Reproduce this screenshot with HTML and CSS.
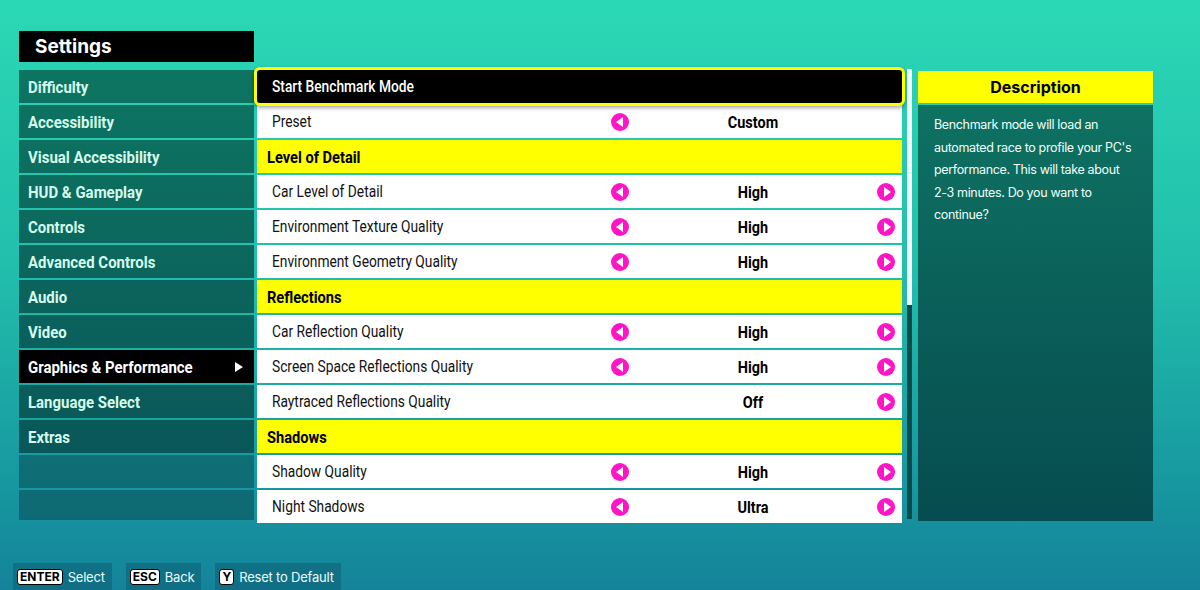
FILE: index.html
```html
<!DOCTYPE html>
<html lang="en">
<head>
    <meta charset="UTF-8">
    <meta name="viewport" content="width=device-width, initial-scale=1.0">
    <title>Settings</title>
    <link rel="stylesheet" href="styles.css">
</head>
<body>
    <div class="screen">
        <div class="main">
            <!-- left menu -->
            <div class="side">
                <h1 class="title">Settings</h1>
                <ul class="menu">
                    <li><span class="t">Difficulty</span></li>
                    <li><span class="t">Accessibility</span></li>
                    <li><span class="t">Visual Accessibility</span></li>
                    <li><span class="t">HUD &amp; Gameplay</span></li>
                    <li><span class="t">Controls</span></li>
                    <li><span class="t">Advanced Controls</span></li>
                    <li><span class="t">Audio</span></li>
                    <li><span class="t">Video</span></li>
                    <li class="on"><span class="t">Graphics &amp; Performance</span> <span class="tri"></span></li>
                    <li><span class="t">Language Select</span></li>
                    <li><span class="t">Extras</span></li>
                    <li class="empty"></li>
                    <li class="empty"></li>
                </ul>
            </div>

            <!-- options list -->
            <div class="options">
                <div class="list">
                    <div class="row bench"><span class="t">Start Benchmark Mode</span></div>
                    <div class="row">
                        <span class="label"><span class="t">Preset</span></span>
                        <div class="ctrl"><i class="arr left"></i><b>Custom</b><i class="arr right hide"></i></div>
                    </div>
                    <div class="row head"><span class="t">Level of Detail</span></div>
                    <div class="row">
                        <span class="label"><span class="t">Car Level of Detail</span></span>
                        <div class="ctrl"><i class="arr left"></i><b>High</b><i class="arr right"></i></div>
                    </div>
                    <div class="row">
                        <span class="label"><span class="t">Environment Texture Quality</span></span>
                        <div class="ctrl"><i class="arr left"></i><b>High</b><i class="arr right"></i></div>
                    </div>
                    <div class="row">
                        <span class="label"><span class="t">Environment Geometry Quality</span></span>
                        <div class="ctrl"><i class="arr left"></i><b>High</b><i class="arr right"></i></div>
                    </div>
                    <div class="row head"><span class="t">Reflections</span></div>
                    <div class="row">
                        <span class="label"><span class="t">Car Reflection Quality</span></span>
                        <div class="ctrl"><i class="arr left"></i><b>High</b><i class="arr right"></i></div>
                    </div>
                    <div class="row">
                        <span class="label"><span class="t">Screen Space Reflections Quality</span></span>
                        <div class="ctrl"><i class="arr left"></i><b>High</b><i class="arr right"></i></div>
                    </div>
                    <div class="row">
                        <span class="label"><span class="t">Raytraced Reflections Quality</span></span>
                        <div class="ctrl"><i class="arr left hide"></i><b>Off</b><i class="arr right"></i></div>
                    </div>
                    <div class="row head"><span class="t">Shadows</span></div>
                    <div class="row">
                        <span class="label"><span class="t">Shadow Quality</span></span>
                        <div class="ctrl"><i class="arr left"></i><b>High</b><i class="arr right"></i></div>
                    </div>
                    <div class="row">
                        <span class="label"><span class="t">Night Shadows</span></span>
                        <div class="ctrl"><i class="arr left"></i><b>Ultra</b><i class="arr right"></i></div>
                    </div>
                </div>
                <div class="scroll"><div class="thumb"></div></div>
            </div>

            <!-- description -->
            <div class="desc">
                <div class="desc-head">Description</div>
                <div class="desc-body">Benchmark mode will load an<br>automated race to profile your PC's<br>performance. This will take about<br>2-3 minutes. Do you want to<br>continue?</div>
            </div>
        </div>

        <div class="bottom">
            <div class="hint"><span class="key">ENTER</span>Select</div>
            <div class="hint"><span class="key">ESC</span>Back</div>
            <div class="hint"><span class="key">Y</span>Reset to Default</div>
        </div>
    </div>
</body>
</html>
```

FILE: styles.css
```css
*{padding: 0;
margin: 0;
box-sizing: border-box;}
ul{list-style: none;}
body{
    width: 1200px;
    height: 590px;
    overflow: hidden;
    background: linear-gradient(180deg, #2bd8b5 0%, #22bfac 45%, #179aa0 80%, #14839a 100%);
    font-family: "Inter", "Liberation Sans", sans-serif;
}
.screen{
    height: 590px;
    display: flex;
    flex-direction: column;
    padding: 31px 0 0 19px;
}
.main{
    display: flex;
    align-items: flex-start;
    height: 490px;
}
/* narrow game font: squeeze Roboto */
.t{
    display: inline-block;
    white-space: nowrap;
    transform: scaleX(0.86);
    transform-origin: left center;
}

/* left menu */
.side{
    width: 235px;
}
.title{
    height: 31px;
    background: #000;
    color: #fff;
    font-size: 19px;
    font-weight: 700;
    line-height: 31px;
    padding-left: 16px;
    margin-bottom: 8px;
}
.menu{
    display: flex;
    flex-direction: column;
    gap: 2px;
    height: 450px;
    overflow: hidden;
}
.menu li{
    height: 33px;
    flex: none;
    display: flex;
    align-items: center;
    padding: 0 9px;
    font-family: "Roboto", "Liberation Sans", sans-serif;
    font-weight: 700;
    font-size: 17px;
    color: #d4fbec;
    background: linear-gradient(180deg, #0e7a64 0px, #0c6b5e 200px, #0a5859 440px, #0a5059 540px) fixed;
}
.menu li .t{
    transform: scaleX(0.88);
}
.menu li.on{
    background: #000;
    color: #fff;
    justify-content: space-between;
}
.menu li.empty{
    background: rgba(10, 72, 82, 0.55);
}
.tri{
    width: 0;
    height: 0;
    border-left: 8px solid #fff;
    border-top: 5px solid transparent;
    border-bottom: 5px solid transparent;
    margin-right: 2px;
}

/* options */
.options{
    display: flex;
    gap: 5px;
    margin-left: 3px;
    margin-top: 39px;
}
.list{
    width: 645px;
    height: 450px;
    display: flex;
    flex-direction: column;
    gap: 2px;
}
.row{
    height: 33px;
    flex: none;
    background: #fff;
    display: flex;
    align-items: center;
    padding-left: 15px;
    font-family: "Roboto", "Liberation Sans", sans-serif;
    font-size: 16px;
    color: #111;
}
.row.head{
    background: #ffff00;
    padding-left: 10px;
    font-weight: 700;
    font-size: 17px;
    color: #000;
}
.row.bench{
    background: #000;
    color: #fff;
    font-weight: 500;
    font-size: 16px;
    border: 3px solid #ffff00;
    border-radius: 6px;
    height: 39px;
    margin: -3px -3px -3px;
    padding-left: 15px;
    box-shadow: 0 2px 4px rgba(0, 0, 0, 0.35);
    position: relative;
    z-index: 1;
}
.label{
    flex: 1;
}
.ctrl{
    width: 284px;
    margin-right: 7px;
    display: flex;
    align-items: center;
}
.ctrl b{
    flex: 1;
    text-align: center;
    font-size: 17px;
    font-weight: 700;
    color: #000;
    transform: scaleX(0.85);
}
.arr{
    width: 18px;
    height: 18px;
    border-radius: 50%;
    background: #ff14c8;
    position: relative;
    flex: none;
}
.arr::after{
    content: "";
    position: absolute;
    top: 4px;
    width: 0;
    height: 0;
    border-top: 5px solid transparent;
    border-bottom: 5px solid transparent;
}
.arr.left::after{
    left: 5px;
    border-right: 7px solid #fff;
}
.arr.right::after{
    left: 7px;
    border-left: 7px solid #fff;
}
.arr.hide{
    visibility: hidden;
}
.scroll{
    width: 5px;
    height: 450px;
    background: #0a4c4c;
    margin-top: -1px;
}
.thumb{
    height: 236px;
    background: #f4fffb;
}

/* description */
.desc{
    width: 235px;
    margin-left: 6px;
    margin-top: 40px;
    display: flex;
    flex-direction: column;
    gap: 2px;
}
.desc-head{
    height: 32px;
    background: #ffff00;
    text-align: center;
    line-height: 32px;
    font-weight: 700;
    font-size: 16px;
    color: #000;
}
.desc-body{
    height: 416px;
    background: linear-gradient(180deg, #0e7262 0%, #0a5e59 50%, #064c50 100%);
    color: #f2fff9;
    font-size: 12.5px;
    letter-spacing: -0.35px;
    line-height: 22.5px;
    white-space: nowrap;
    padding: 9px 12px 0 16px;
}

/* bottom hints */
.bottom{
    display: flex;
    gap: 14px;
    margin-top: 42px;
    margin-left: -6px;
}
.hint{
    height: 28px;
    background: rgba(12, 95, 115, 0.55);
    display: flex;
    align-items: center;
    padding: 0 7px 0 4px;
    color: #eafcff;
    font-size: 13px;
    letter-spacing: -0.2px;
}
.key{
    background: #fff;
    color: #000;
    border: 1.5px solid #000;
    border-radius: 3px;
    font-weight: 700;
    font-size: 12px;
    letter-spacing: 0;
    height: 16px;
    line-height: 13px;
    padding: 0 2px;
    margin-right: 5px;
}
```
